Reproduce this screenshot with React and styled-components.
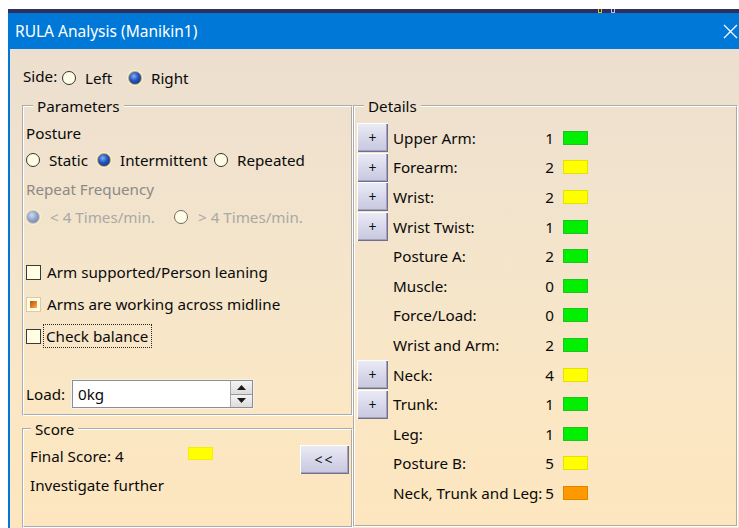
import React from 'react';
import styled, { createGlobalStyle } from 'styled-components';

const Global = createGlobalStyle`
  html, body { margin: 0; padding: 0; background: #ffffff; }
  body { font-family: "Noto Sans", "Open Sans", sans-serif; color: #0a0a0a; }
  * { box-sizing: border-box; }
`;

const TITLE_FONT = '15.5px';
const FONT = '15.2px';

const Page = styled.div`
  width: 739px;
  height: 528px;
  overflow: hidden;
  padding-top: 9px;
  background: #ffffff;
`;

const Window = styled.div`
  margin-left: 8px;
  height: 519px;
  display: flex;
  flex-direction: column;
`;

const TopEdge = styled.div`
  height: 4px;
  flex: none;
  background: #2e2f5c;
  display: flex;
  padding-left: 590px;
  gap: 9px;
`;

const EdgeMark = styled.span`
  width: 4px;
  height: 4px;
  border: 1px solid ${p => p.$c};
  border-top: none;
`;

const TitleBar = styled.div`
  height: 36px;
  flex: none;
  background: #0078d7;
  color: #ffffff;
  display: flex;
  align-items: center;
  justify-content: space-between;
  padding: 0 1px 0 7px;
  font-size: ${TITLE_FONT};
`;

const Body = styled.div`
  flex: 1;
  min-height: 0;
  border-left: 2px solid #0078d7;
  background: linear-gradient(#ecdfcf 0%, #f4e5cb 45%, #fbe7c4 75%, #fde6bf 100%);
  padding: 16px 1px 0 12px;
  display: flex;
  flex-direction: column;
  font-size: ${FONT};
`;

const SideRow = styled.div`
  height: 24px;
  display: flex;
  align-items: center;
  margin-left: 1px;
  margin-bottom: 7px;
`;

const SideLabel = styled.span`
  width: 39px;
  flex: none;
  margin-top: -3px;
`;

const SideOptions = styled.div`
  display: flex;
  align-items: center;
  margin-top: 2px;
`;

const Columns = styled.div`
  display: flex;
  flex: 1;
  min-height: 0;
`;

const LeftCol = styled.div`
  width: 331px;
  flex: none;
  display: flex;
  flex-direction: column;
  gap: 3px;
`;

const Group = styled.fieldset`
  margin: 0;
  padding: 0 0 0 ${p => p.$pl || 0}px;
  min-width: 0;
  border: 2px groove #ffffff;
  height: ${p => p.$h}px;
  width: ${p => (p.$w ? `${p.$w}px` : 'auto')};
  flex: none;
  display: block;
`;

const Legend = styled.legend`
  margin-left: ${p => p.$ml || 7}px;
  padding: 0 4px;
  line-height: 20px;
  height: 20px;
  font-size: ${FONT};
`;

const Line = styled.div`
  height: ${p => p.$h || 22}px;
  margin-top: ${p => p.$mt || 0}px;
  display: flex;
  align-items: center;
  white-space: nowrap;
  color: ${p => (p.$muted ? '#8c8a86' : 'inherit')};
`;

const Option = styled.label`
  display: inline-flex;
  align-items: center;
  gap: ${p => p.$gap || 9}px;
  width: ${p => (p.$w ? `${p.$w}px` : 'auto')};
  flex: none;
  color: ${p => (p.$disabled ? '#aaa8a4' : 'inherit')};
`;

const RadioDot = styled.span`
  width: 14px;
  height: 14px;
  flex: none;
  border-radius: 50%;
  border: 1px solid ${p => (p.$checked ? (p.$disabled ? '#d3cab9' : '#c9ab6c') : p.$disabled ? '#6f6b64' : '#333333')};
  background: ${p =>
    p.$checked
      ? p.$disabled
        ? 'radial-gradient(circle at 40% 35%, #d2dcef 0%, #8ba0c9 50%, #6a7fac 100%)'
        : 'radial-gradient(circle at 40% 35%, #86aef2 0%, #2457c0 42%, #0a2870 100%)'
      : '#fffde6'};
  box-shadow: ${p => (p.$checked ? '0 0 0 1px rgba(255,242,205,0.8)' : 'none')};
`;

const Radio = ({ label, checked, disabled, w, gap }) => (
  <Option $w={w} $disabled={disabled} $gap={gap}>
    <RadioDot $checked={checked} $disabled={disabled} />
    {label}
  </Option>
);

const CheckBox = styled.span`
  width: 15px;
  height: 15px;
  flex: none;
  border: 1px solid ${p => (p.$mixed ? '#e2c89e' : '#3a3a3a')};
  background: #fffde2;
  padding: 3px;
  display: flex;
`;

const MixedFill = styled.span`
  flex: 1;
  background: linear-gradient(135deg, #b9520e 0%, #e07a25 50%, #f7b060 100%);
`;

const CheckOption = styled.label`
  display: inline-flex;
  align-items: center;
  gap: 6px;
`;

const FocusText = styled.span`
  border: 1px dotted #2a2a2a;
  padding: 1px 3px 1px 2px;
  margin-left: -4px;
  line-height: 20px;
`;

const Check = ({ label, mixed, focused }) => (
  <CheckOption>
    <CheckBox $mixed={mixed}>{mixed && <MixedFill />}</CheckBox>
    {focused ? <FocusText>{label}</FocusText> : label}
  </CheckOption>
);

const LoadLabel = styled.span`
  width: 46px;
  flex: none;
`;

const SpinField = styled.div`
  width: 181px;
  height: 28px;
  display: flex;
  background: #ffffff;
  border: 1px solid #8e8e8e;
  box-shadow: 0 0 0 1px #f2f2f2;
`;

const SpinText = styled.span`
  flex: 1;
  padding-left: 5px;
  line-height: 26px;
`;

const SpinButtons = styled.div`
  width: 22px;
  display: flex;
  flex-direction: column;
  border-left: 1px solid #a9a9a9;
`;

const SpinHalf = styled.span`
  flex: 1;
  display: flex;
  align-items: center;
  justify-content: center;
  background: linear-gradient(#f4f4f4, #dcdcdc);
  border-top: ${p => (p.$down ? '1px solid #9a9a9a' : 'none')};
`;

const ScoreGrid = styled.div`
  display: grid;
  grid-template-columns: 1fr auto;
  grid-template-rows: 29px 22px;
  padding: 6px 2px 0 6px;
`;

const ScoreLine = styled.div`
  display: flex;
  align-items: flex-start;
  line-height: 22px;
`;

const ScoreText = styled.span`
  width: 158px;
  flex: none;
`;

const Swatch = styled.span`
  width: 25px;
  height: ${p => p.$h || 14}px;
  flex: none;
  margin-top: ${p => p.$mt || 0}px;
  background: ${p => p.$c};
  box-shadow: inset 0 0 0 1px ${p => p.$edge};
`;

const BevelButton = styled.button`
  width: ${p => p.$w}px;
  height: 29px;
  padding: 0;
  margin: 0;
  border: none;
  font-family: "Noto Sans", sans-serif;
  font-size: ${p => p.$fs || 14}px;
  letter-spacing: ${p => p.$ls || 0}px;
  color: #111111;
  background: linear-gradient(#ececf7 0%, #dadaec 45%, #c6c6de 100%);
  box-shadow: inset 1px 1px 0 #ffffff, inset -1px -1px 0 #6f6f8f, inset -2px -2px 0 #a2a2bd;
  display: flex;
  align-items: center;
  justify-content: center;
`;

const DetailList = styled.div`
  display: grid;
  grid-template-columns: 31px 147px 9px 25px;
  grid-auto-rows: 29.6px;
  column-gap: 5px;
  padding: 7px 0 0 2px;
  align-items: center;
`;

const DetailLabel = styled.span`
  grid-column: 2;
  white-space: nowrap;
`;

const DetailValue = styled.span`
  text-align: right;
`;

const DetailSwatch = styled(Swatch)`
  margin-left: 4px;
`;

const COLORS = {
  green: ['#00f000', '#22c022'],
  yellow: ['#ffff00', '#e2e200'],
  orange: ['#ff9900', '#e08400'],
};

const details = [
  { label: 'Upper Arm:', value: 1, color: 'green', expand: true },
  { label: 'Forearm:', value: 2, color: 'yellow', expand: true },
  { label: 'Wrist:', value: 2, color: 'yellow', expand: true },
  { label: 'Wrist Twist:', value: 1, color: 'green', expand: true },
  { label: 'Posture A:', value: 2, color: 'green' },
  { label: 'Muscle:', value: 0, color: 'green' },
  { label: 'Force/Load:', value: 0, color: 'green' },
  { label: 'Wrist and Arm:', value: 2, color: 'green' },
  { label: 'Neck:', value: 4, color: 'yellow', expand: true },
  { label: 'Trunk:', value: 1, color: 'green', expand: true },
  { label: 'Leg:', value: 1, color: 'green' },
  { label: 'Posture B:', value: 5, color: 'yellow' },
  { label: 'Neck, Trunk and Leg:', value: 5, color: 'orange' },
];

const CloseIcon = () => (
  <svg width="15" height="15" viewBox="0 0 15 15">
    <path d="M1 1 L14 14 M14 1 L1 14" stroke="#ffffff" strokeWidth="1.3" />
  </svg>
);

const Arrow = ({ down }) => (
  <svg width="9" height="5" viewBox="0 0 9 5">
    <path d={down ? 'M0 0 H9 L4.5 5 Z' : 'M0 5 H9 L4.5 0 Z'} fill="#1a1a1a" />
  </svg>
);

export default function App() {
  return (
    <Page>
      <Global />
      <Window>
        <TopEdge>
          <EdgeMark $c="#d8c21a" />
          <EdgeMark $c="#c9b8e8" />
        </TopEdge>
        <TitleBar>
          <span>RULA Analysis (Manikin1)</span>
          <CloseIcon />
        </TitleBar>
        <Body>
          <SideRow>
            <SideLabel>Side:</SideLabel>
            <SideOptions>
              <Radio label="Left" w={66} />
              <Radio label="Right" checked />
            </SideOptions>
          </SideRow>
          <Columns>
            <LeftCol>
              <Group $h={320} $pl={2}>
                <Legend>Parameters</Legend>
                <Line $mt={6}>Posture</Line>
                <Line $mt={5}>
                  <Radio label="Static" w={71} />
                  <Radio label="Intermittent" checked w={117} />
                  <Radio label="Repeated" />
                </Line>
                <Line $mt={7} $muted>Repeat Frequency</Line>
                <Line $mt={6}>
                  <Radio label="< 4 Times/min." checked disabled w={148} gap={10} />
                  <Radio label="> 4 Times/min." disabled gap={10} />
                </Line>
                <Line $mt={33}>
                  <Check label="Arm supported/Person leaning" />
                </Line>
                <Line $mt={10}>
                  <Check label="Arms are working across midline" mixed />
                </Line>
                <Line $mt={10}>
                  <Check label="Check balance" focused />
                </Line>
                <Line $mt={33} $h={28}>
                  <LoadLabel>Load:</LoadLabel>
                  <SpinField>
                    <SpinText>0kg</SpinText>
                    <SpinButtons>
                      <SpinHalf><Arrow /></SpinHalf>
                      <SpinHalf $down><Arrow down /></SpinHalf>
                    </SpinButtons>
                  </SpinField>
                </Line>
              </Group>
              <Group $h={109}>
                <Legend>Score</Legend>
                <ScoreGrid>
                  <ScoreLine>
                    <ScoreText>Final Score: 4</ScoreText>
                    <Swatch $c="#ffff00" $edge="#f0f000" $h={13} $mt={2} />
                  </ScoreLine>
                  <BevelButton $w={49} $fs={14} $ls={2}>&lt;&lt;</BevelButton>
                  <ScoreLine>Investigate further</ScoreLine>
                </ScoreGrid>
              </Group>
            </LeftCol>
            <Group $h={431} $w={385}>
              <Legend $ml={9}>Details</Legend>
              <DetailList>
                {details.map(d => (
                  <React.Fragment key={d.label}>
                    {d.expand ? <BevelButton $w={31}>+</BevelButton> : <span />}
                    <DetailLabel>{d.label}</DetailLabel>
                    <DetailValue>{d.value}</DetailValue>
                    <DetailSwatch $c={COLORS[d.color][0]} $edge={COLORS[d.color][1]} />
                  </React.Fragment>
                ))}
              </DetailList>
            </Group>
          </Columns>
        </Body>
      </Window>
    </Page>
  );
}
